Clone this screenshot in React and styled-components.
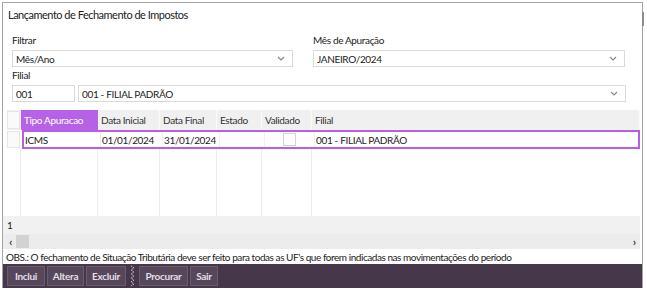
import React from 'react';
import styled, { createGlobalStyle } from 'styled-components';

const GlobalStyle = createGlobalStyle`
  html, body {
    margin: 0;
    padding: 0;
    background: #ffffff;
  }
  body {
    font-family: Lato, "Open Sans", Arial, sans-serif;
    font-size: 10px;
    letter-spacing: -0.35px;
    color: #222;
  }
`;

const Window = styled.div`
  position: relative;
  margin: 2px 0 0 2px;
  width: 639px;
  height: 285px;
  border: 1px solid #a4a4a4;
  border-bottom: none;
  display: flex;
  flex-direction: column;
  background: #fff;

  &::after {
    content: '';
    position: absolute;
    right: -2px;
    top: 9px;
    width: 2px;
    height: 14px;
    background: #8c8c8c;
  }
`;

const Title = styled.div`
  font-size: 11px;
  letter-spacing: -0.5px;
  color: #222;
  padding: 5px 0 0 5px;
  height: 24px;
  box-sizing: border-box;
`;

const Form = styled.div`
  padding: 8px 16px 0 9px;
  display: flex;
  flex-direction: column;
`;

const FilterRow = styled.div`
  display: grid;
  grid-template-columns: 281px 312px;
  column-gap: 20px;
`;

const Field = styled.div`
  display: flex;
  flex-direction: column;
`;

const Label = styled.div`
  line-height: 12px;
  height: 12px;
  margin-bottom: 4px;
  color: #222;
`;

const SelectBox = styled.div`
  height: 17px;
  box-sizing: border-box;
  border: 1px solid #dadada;
  display: flex;
  align-items: center;
  justify-content: space-between;
  padding: 0 7px 0 3px;
  background: #fff;
`;

const Chevron = () => (
  <svg width="8" height="5" viewBox="0 0 8 5">
    <path d="M1 1 L4 4 L7 1" fill="none" stroke="#888" strokeWidth="1.2" />
  </svg>
);

const FilialRow = styled.div`
  display: grid;
  grid-template-columns: 63px 1fr;
  column-gap: 3px;
`;

const GridArea = styled.div`
  margin: 8px 2px 0 4px;
  display: flex;
  flex-direction: column;
`;

const GRID_COLS = '14px 77px 62px 57px 45px 50px 1fr';

const HeaderRow = styled.div`
  display: grid;
  grid-template-columns: ${GRID_COLS};
  background: #f0f0f0;
  height: 20px;
`;

const HeaderCell = styled.div`
  display: flex;
  align-items: center;
  padding-left: 3px;
  color: ${(p) => (p.$active ? '#fff' : '#333')};
  background: ${(p) => (p.$active ? '#b562e6' : 'transparent')};
  border-right: 1px solid ${(p) => (p.$active ? '#b562e6' : '#fafafa')};
`;

const IndicatorCell = styled.div`
  background: #fafafa;
  border: 1px solid #e6e6e6;
  box-sizing: border-box;
  margin: 1px 1px 1px 0;
`;

const DataRow = styled.div`
  display: grid;
  grid-template-columns: 14px 1fr;
  height: 19px;
`;

const SelectedRow = styled.div`
  display: grid;
  grid-template-columns: 77px 62px 57px 45px 50px 1fr;
  border: 2px solid #b65ee8;
  margin-left: 1px;
  box-sizing: border-box;
  background: #fff;
`;

const Cell = styled.div`
  display: flex;
  align-items: center;
  justify-content: ${(p) => (p.$center ? 'center' : 'flex-start')};
  padding-left: ${(p) => (p.$center ? '0' : '1px')};
  color: #222;
  border-right: 1px solid #f0f0f0;

  &:last-child {
    border-right: none;
  }
`;

const Check = styled.div`
  width: 11px;
  height: 11px;
  border: 1px solid #d4d4d4;
  background: #fff;
`;

const Filler = styled.div`
  display: grid;
  grid-template-columns: ${GRID_COLS};
  height: 67px;
`;

const FillerCell = styled.div`
  border-right: 1px solid #ededed;

  &:last-child {
    border-right: none;
  }
`;

const CountRow = styled.div`
  height: 18px;
  background: #f1f1f1;
  display: flex;
  align-items: center;
  padding-left: 4px;
  margin-left: -4px;
`;

const ScrollBar = styled.div`
  height: 15px;
  background: #ececec;
  display: flex;
  align-items: center;
  margin-left: -4px;
  padding: 0 4px 0 6px;
  font-size: 12px;
  font-weight: 700;
  color: #444;
`;

const Thumb = styled.div`
  width: 13px;
  height: 13px;
  background: #d2d2d2;
  margin-left: 4px;
`;

const Spacer = styled.div`
  flex: 1;
`;

const Obs = styled.div`
  height: 15px;
  display: flex;
  align-items: center;
  padding-left: 3px;
  color: #222;
  margin-top: 1px;
  white-space: nowrap;
  letter-spacing: -0.45px;
`;

const Toolbar = styled.div`
  height: 25px;
  background: #46374b;
  display: flex;
  align-items: center;
  gap: 2px;
  padding-left: 4px;
  margin-top: auto;
`;

const Button = styled.div`
  width: ${(p) => p.$w}px;
  height: 20px;
  box-sizing: border-box;
  display: flex;
  align-items: center;
  justify-content: center;
  background: #56475b;
  border: 1px solid #6a5c6e;
  color: #e4dee6;
  font-weight: 700;
  letter-spacing: -0.3px;
`;

const Separator = styled.div`
  width: 9px;
  height: 22px;
  display: flex;
  align-items: center;
  justify-content: center;
`;

const Zigzag = () => (
  <svg width="5" height="22" viewBox="0 0 5 22">
    <path
      d="M1 1 L4 3 L1 5 L4 7 L1 9 L4 11 L1 13 L4 15 L1 17 L4 19 L1 21"
      fill="none"
      stroke="#d8d0da"
      strokeWidth="1"
      strokeDasharray="1.5 1"
    />
  </svg>
);

const columns = ['Data Inicial', 'Data Final', 'Estado', 'Validado', 'Filial'];

export default function App() {
  return (
    <>
      <GlobalStyle />
      <Window>
        <Title>Lançamento de Fechamento de Impostos</Title>
        <Form>
          <FilterRow>
            <Field>
              <Label>Filtrar</Label>
              <SelectBox>
                <span>Mês/Ano</span>
                <Chevron />
              </SelectBox>
            </Field>
            <Field>
              <Label>Mês de Apuração</Label>
              <SelectBox>
                <span>JANEIRO/2024</span>
                <Chevron />
              </SelectBox>
            </Field>
          </FilterRow>
          <Field style={{ marginTop: 2 }}>
            <Label>Filial</Label>
            <FilialRow>
              <SelectBox>
                <span>001</span>
              </SelectBox>
              <SelectBox>
                <span>001 - FILIAL PADRÃO</span>
                <Chevron />
              </SelectBox>
            </FilialRow>
          </Field>
        </Form>
        <GridArea>
          <HeaderRow>
            <IndicatorCell />
            <HeaderCell $active>Tipo Apuracao</HeaderCell>
            {columns.map((c) => (
              <HeaderCell key={c}>{c}</HeaderCell>
            ))}
          </HeaderRow>
          <DataRow>
            <IndicatorCell />
            <SelectedRow>
              <Cell>ICMS</Cell>
              <Cell>01/01/2024</Cell>
              <Cell>31/01/2024</Cell>
              <Cell />
              <Cell $center>
                <Check />
              </Cell>
              <Cell>001 - FILIAL PADRÃO</Cell>
            </SelectedRow>
          </DataRow>
          <Filler>
            {Array.from({ length: 7 }).map((_, i) => (
              <FillerCell key={i} />
            ))}
          </Filler>
          <CountRow>1</CountRow>
          <ScrollBar>
            <span>‹</span>
            <Thumb />
            <Spacer />
            <span>›</span>
          </ScrollBar>
        </GridArea>
        <Obs>
          OBS.: O fechamento de Situação Tributária deve ser feito para todas as UF's que forem indicadas nas movimentações do período
        </Obs>
        <Toolbar>
          <Button $w={38}>Inclui</Button>
          <Button $w={37}>Altera</Button>
          <Button $w={40}>Excluir</Button>
          <Separator>
            <Zigzag />
          </Separator>
          <Button $w={49}>Procurar</Button>
          <Button $w={28}>Sair</Button>
        </Toolbar>
      </Window>
    </>
  );
}
